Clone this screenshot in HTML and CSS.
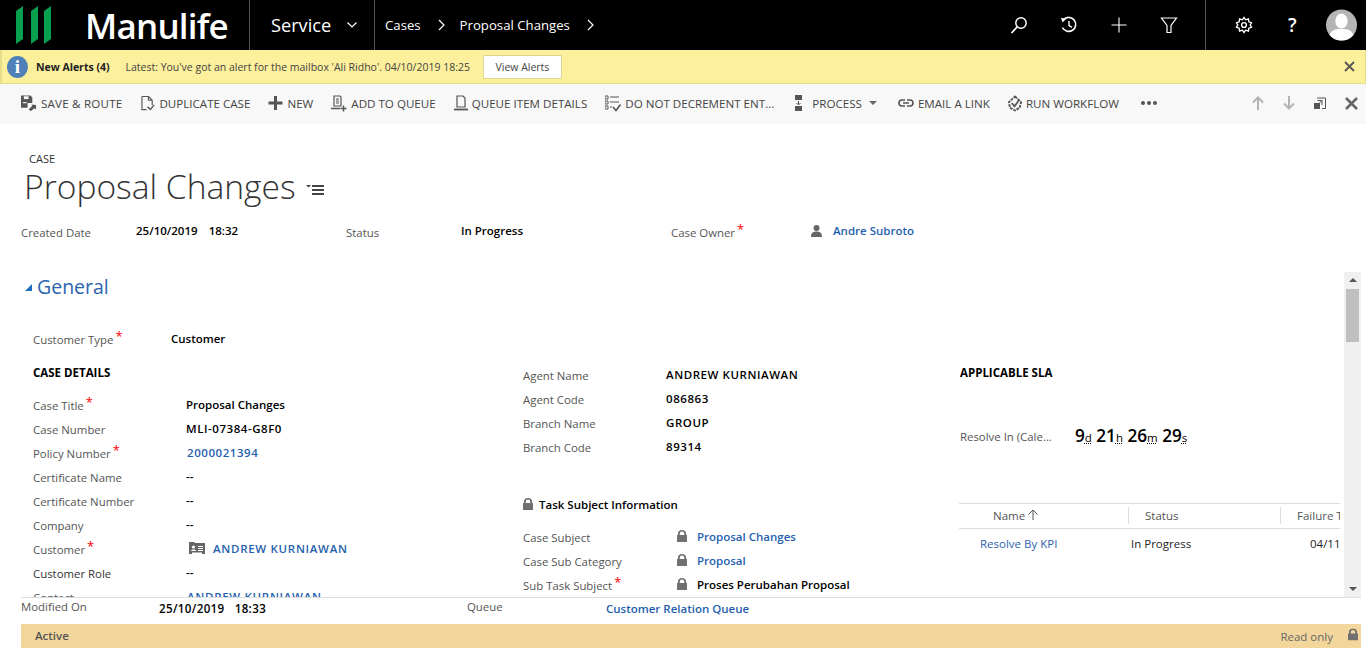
FILE: index.html
```html
<!DOCTYPE html>
<html lang="en">
<head>
  <meta charset="UTF-8">
  <meta name="viewport" content="width=device-width, initial-scale=1.0">
  <title>Proposal Changes</title>
  <link rel="stylesheet" href="styles.css">
</head>
<body>
  <!-- top navigation -->
  <header class="nav">
    <div class="logo">
      <svg class="logo-mark" width="36" height="38" viewBox="0 0 36 38">
        <path d="M0 5 L7 0 V33 L0 38 Z M15 5 L22 0 V33 L15 38 Z M28 5 L35 0 V33 L28 38 Z" fill="#06a04f"/>
      </svg>
      <span class="logo-text">Manulife</span>
    </div>
    <div class="nav-service">
      <span>Service</span>
      <svg width="10" height="6" viewBox="0 0 10 6"><path d="M0.5 0.5 L5 5 L9.5 0.5" fill="none" stroke="#fff" stroke-width="1.2"/></svg>
    </div>
    <div class="crumbs">
      <span>Cases</span>
      <svg width="7" height="12" viewBox="0 0 7 12"><path d="M1 1 L6 6 L1 11" fill="none" stroke="#fff" stroke-width="1.2"/></svg>
      <span>Proposal Changes</span>
      <svg width="7" height="12" viewBox="0 0 7 12"><path d="M1 1 L6 6 L1 11" fill="none" stroke="#fff" stroke-width="1.2"/></svg>
    </div>
    <div class="nav-icons">
      <svg width="18" height="18" viewBox="0 0 18 18"><circle cx="11" cy="7" r="5.2" fill="none" stroke="#fff" stroke-width="1.5"/><path d="M7.2 10.8 L1.5 17" stroke="#fff" stroke-width="1.7"/></svg>
      <svg width="18" height="18" viewBox="0 0 18 18"><path d="M3.4 3.8 A7 7 0 1 1 2.4 11.5" fill="none" stroke="#fff" stroke-width="1.6"/><path d="M1 2 L6.5 2.4 L2.6 6.6 Z" fill="#fff"/><path d="M9 5 V9.6 L12 11.4" fill="none" stroke="#fff" stroke-width="1.4"/></svg>
      <svg width="18" height="18" viewBox="0 0 18 18"><path d="M9 1.5 V16.5 M1.5 9 H16.5" stroke="#fff" stroke-width="1.1"/></svg>
      <svg width="18" height="18" viewBox="0 0 18 18"><path d="M1.5 2 H16.5 L11 9.5 V16.5 H7 V9.5 Z" fill="none" stroke="#fff" stroke-width="1.2"/></svg>
    </div>
    <div class="nav-end">
      <svg width="18" height="18" viewBox="0 0 18 18"><circle cx="9" cy="9" r="2.4" fill="none" stroke="#fff" stroke-width="1.4"/><path d="M9 1.5 L10.6 3.8 L13.4 3 L13.9 5.8 L16.5 6.8 L15.2 9 L16.5 11.2 L13.9 12.2 L13.4 15 L10.6 14.2 L9 16.5 L7.4 14.2 L4.6 15 L4.1 12.2 L1.5 11.2 L2.8 9 L1.5 6.8 L4.1 5.8 L4.6 3 L7.4 3.8 Z" fill="none" stroke="#fff" stroke-width="1.4"/></svg>
      <span class="help">?</span>
      <svg width="31" height="32" viewBox="0 0 31 32"><circle cx="15.5" cy="16" r="15.5" fill="#b5b5b5"/><ellipse cx="15.5" cy="12" rx="6.2" ry="7.5" fill="#fff"/><path d="M3.5 26 C6 20 11 20 15.5 20 C20 20 25 20 27.5 26 C24.5 29.8 20 31.5 15.5 31.5 C11 31.5 6.5 29.8 3.5 26 Z" fill="#fff"/></svg>
    </div>
  </header>

  <!-- alert bar -->
  <div class="alert">
    <span class="info-badge">i</span>
    <b class="alert-title">New Alerts (4)</b>
    <span class="alert-text">Latest: You've got an alert for the mailbox 'Ali Ridho'. 04/10/2019 18:25</span>
    <button class="alert-btn">View Alerts</button>
    <svg class="alert-close" width="11" height="11" viewBox="0 0 11 11"><path d="M1 1 L10 10 M10 1 L1 10" stroke="#555" stroke-width="1.8"/></svg>
  </div>

  <!-- command bar -->
  <div class="toolbar">
    <div class="tool tool-save"><svg width="16" height="17" viewBox="0 0 17 17"><path d="M0 0 H10 L12 2 V8 H7 V13 H0 Z" fill="#555"/><rect x="3" y="0.8" width="5" height="3" fill="#f8f8f8"/><rect x="2" y="7" width="4" height="1.2" fill="#f8f8f8"/><path d="M8 15 L12 11 L11 9.5 L16 10 L16 15 L14.5 13.5 L10.5 16.5 Z" fill="#555"/></svg>SAVE &amp; ROUTE</div>
    <div class="tool"><svg width="14" height="17" viewBox="0 0 15 17"><path d="M1 1 H8 L12 5 V10 M8 1 V5 H12 M6 15 H1 V1" fill="none" stroke="#555" stroke-width="1.2"/><path d="M7 12 L10 15 L14 10" fill="none" stroke="#555" stroke-width="1.5"/></svg>DUPLICATE CASE</div>
    <div class="tool"><svg width="15" height="14" viewBox="0 0 14 14"><path d="M7 0 V14 M0 7 H14" stroke="#555" stroke-width="3"/></svg>NEW</div>
    <div class="tool"><svg width="16" height="17" viewBox="0 0 16 17"><path d="M3 1 H9 L10 2 V11 H3 Z" fill="none" stroke="#555" stroke-width="1.2"/><path d="M5 4 H8 M5 6 H8 M5 8 H8" stroke="#555"/><path d="M0 13.5 H9" stroke="#555" stroke-width="1.5"/><path d="M12.5 10.5 V16.5 M9.5 13.5 H15.5" stroke="#555" stroke-width="1.5"/></svg>ADD TO QUEUE</div>
    <div class="tool"><svg width="14" height="16" viewBox="0 0 14 16"><path d="M3 1 H9 L11 3 V12 H3 Z" fill="none" stroke="#555" stroke-width="1.2"/><path d="M0 14.5 H14" stroke="#555" stroke-width="1.8"/></svg>QUEUE ITEM DETAILS</div>
    <div class="tool"><svg width="16" height="17" viewBox="0 0 16 17"><path d="M0 1 H3 V4 H0 Z M0 6 H3 V9 H0 Z M0 11 H3 V14 H0 Z" fill="none" stroke="#555"/><path d="M5 2 H14 M5 7 H14 M5 12 H7" stroke="#555" stroke-width="1.2"/><path d="M8 12 L11 15.5 L15.5 9.5" fill="none" stroke="#555" stroke-width="1.6"/></svg>DO NOT DECREMENT ENT...</div>
    <div class="tool tool-process"><svg width="7" height="16" viewBox="0 0 7 16"><rect x="0" y="0" width="7" height="5" fill="#555"/><path d="M3.5 6 V9 M1.5 8 L3.5 10 L5.5 8" fill="none" stroke="#555"/><rect x="0" y="11" width="7" height="5" fill="#555"/></svg>PROCESS<i class="caret"></i></div>
    <div class="tool"><svg width="16" height="8" viewBox="0 0 16 8"><path d="M7 1 H4 A3 3 0 0 0 4 7 H7 M9 1 H12 A3 3 0 0 1 12 7 H9 M5 4 H11" fill="none" stroke="#555" stroke-width="1.6"/></svg>EMAIL A LINK</div>
    <div class="tool"><svg width="14" height="17" viewBox="0 0 15 17"><path d="M7.5 1 L14 7 L12.5 13 L7.5 16 L2 13 L1 7 Z" fill="none" stroke="#555" stroke-width="2" stroke-dasharray="3 1"/><path d="M4 8 L7 11.5 L12 4.5" fill="none" stroke="#555" stroke-width="1.8"/></svg>RUN WORKFLOW</div>
    <div class="tool-dots"><i></i><i></i><i></i></div>
    <div class="tool-nav">
      <svg width="12" height="14" viewBox="0 0 12 14"><path d="M6 14 V2 M1 6.5 L6 1.5 L11 6.5" fill="none" stroke="#b3b3b3" stroke-width="2"/></svg>
      <svg width="12" height="14" viewBox="0 0 12 14"><path d="M6 0 V12 M1 7.5 L6 12.5 L11 7.5" fill="none" stroke="#b3b3b3" stroke-width="2"/></svg>
      <svg width="12" height="12" viewBox="0 0 12 12"><path d="M3 1 H11.5 V11.5 H8" fill="none" stroke="#555"/><rect x="0" y="6" width="6" height="6" fill="#555"/><path d="M3.5 3.5 H8 V8 M8 3.5 L4 7.5" fill="none" stroke="#555"/></svg>
      <svg width="13" height="13" viewBox="0 0 13 13"><path d="M1 1 L12 12 M12 1 L1 12" stroke="#666" stroke-width="2.6"/></svg>
    </div>
  </div>

  <!-- record header -->
  <section class="record">
    <div class="record-type">CASE</div>
    <h1>Proposal Changes
      <svg width="18" height="12" viewBox="0 0 18 12"><path d="M0 1 H5 L2.5 3.5 Z" fill="#444"/><path d="M6 2 H18 M6 6 H18 M6 10 H18" stroke="#444" stroke-width="2"/></svg>
    </h1>
    <div class="record-fields">
      <span class="label">Created Date</span><b class="value date">25/10/2019&nbsp;&nbsp; 18:32</b>
      <span class="label">Status</span><b class="value">In Progress</b>
      <span class="label">Case Owner<i class="req">*</i></span>
      <span class="owner">
        <svg width="11" height="12" viewBox="0 0 11 12"><circle cx="5.5" cy="3" r="3" fill="#666"/><path d="M0 12 C0 7 3 6.5 5.5 6.5 C8 6.5 11 7 11 12 Z" fill="#666"/></svg>
        <a class="link">Andre Subroto</a>
      </span>
    </div>
  </section>

  <!-- scrolling form -->
  <section class="scroller">
    <div class="scroller-body">
      <h2><i class="section-arrow"></i>General</h2>
      <div class="type-row">
        <span class="label">Customer Type<i class="req">*</i></span>
        <b class="value">Customer</b>
      </div>
      <div class="columns">
        <div class="col-left">
          <h3>CASE DETAILS</h3>
          <div class="rows">
            <span class="label">Case Title<i class="req">*</i></span><b class="value">Proposal Changes</b>
            <span class="label">Case Number</span><b class="value caps">MLI-07384-G8F0</b>
            <span class="label">Policy Number<i class="req">*</i></span><a class="link value-link caps">2000021394</a>
            <span class="label">Certificate Name</span><b class="value">--</b>
            <span class="label">Certificate Number</span><b class="value">--</b>
            <span class="label">Company</span><b class="value">--</b>
            <span class="label">Customer<i class="req">*</i></span>
            <span class="value-icon">
              <svg width="16" height="12" viewBox="0 0 16 12"><path d="M0 0 H5 L6 1 H16 V12 H13 V10.5 H3 V12 H0 Z" fill="#666"/><circle cx="4.5" cy="5" r="1.6" fill="#fff"/><path d="M2 9 C2 7 7 7 7 9 Z" fill="#fff"/><path d="M9 4.5 H14 M9 6.5 H14 M9 8.5 H14" stroke="#fff"/></svg>
              <a class="link caps-wide">ANDREW KURNIAWAN</a>
            </span>
            <span class="label label-dark">Customer Role</span><b class="value">--</b>
            <span class="label">Contact</span><a class="link value-link caps-wide">ANDREW KURNIAWAN</a>
          </div>
        </div>
        <div class="col-mid">
          <div class="rows rows-mid">
            <span class="label">Agent Name</span><b class="value caps">ANDREW KURNIAWAN</b>
            <span class="label">Agent Code</span><b class="value caps">086863</b>
            <span class="label">Branch Name</span><b class="value caps">GROUP</b>
            <span class="label">Branch Code</span><b class="value caps">89314</b>
          </div>
          <h4>
            <svg class="lock" width="10" height="12" viewBox="0 0 10 12"><use href="#lock"/></svg>
            Task Subject Information
          </h4>
          <div class="rows rows-task">
            <span class="label">Case Subject</span>
            <span class="value-lock"><svg class="lock" width="10" height="12" viewBox="0 0 10 12"><use href="#lock"/></svg><a class="link">Proposal Changes</a></span>
            <span class="label">Case Sub Category</span>
            <span class="value-lock"><svg class="lock" width="10" height="12" viewBox="0 0 10 12"><use href="#lock"/></svg><a class="link">Proposal</a></span>
            <span class="label">Sub Task Subject<i class="req">*</i></span>
            <span class="value-lock"><svg class="lock" width="10" height="12" viewBox="0 0 10 12"><use href="#lock"/></svg><b class="value">Proses Perubahan Proposal</b></span>
          </div>
        </div>
        <div class="col-right">
          <h3>APPLICABLE SLA</h3>
          <div class="sla">
            <span class="label">Resolve In (Cale...</span>
            <span class="timer">9<u>d</u> 21<u>h</u> 26<u>m</u> 29<u>s</u></span>
          </div>
          <div class="grid-wrap">
            <div class="grid-row grid-head">
              <span class="th-name">Name
                <svg width="10" height="11" viewBox="0 0 10 11"><path d="M5 11 V1 M0.5 5.5 L5 1 L9.5 5.5" fill="none" stroke="#555" stroke-width="1"/></svg>
              </span>
              <span class="th">Status</span>
              <span class="th">Failure Time</span>
            </div>
            <div class="grid-row grid-body">
              <a class="td-name">Resolve By KPI</a>
              <span class="td-status">In Progress</span>
              <span class="td-date">04/11/2019</span>
            </div>
          </div>
        </div>
      </div>
    </div>
    <div class="scrollbar">
      <i class="arrow-up"></i>
      <div class="track"><div class="thumb"></div></div>
      <i class="arrow-down"></i>
    </div>
  </section>

  <!-- record footer -->
  <footer class="foot">
    <div class="foot-fields">
      <span class="label">Modified On</span><b class="value foot-date">25/10/2019&nbsp;&nbsp; 18:33</b>
      <span class="label">Queue</span><a class="link foot-link">Customer Relation Queue</a>
    </div>
    <div class="status-bar">
      <b>Active</b>
      <span class="readonly">Read only</span>
      <svg width="10" height="13" viewBox="0 0 10 12"><use href="#lock"/></svg>
    </div>
  </footer>

  <svg class="defs" width="0" height="0">
    <symbol id="lock" viewBox="0 0 10 12"><path d="M0 5 H1 V3.5 A4 3.5 0 0 1 9 3.5 V5 H10 V12 H0 Z M2.8 5 H7.2 V3.5 A2.2 2 0 0 0 2.8 3.5 Z" fill="#707070" fill-rule="evenodd"/></symbol>
  </svg>
</body>
</html>
```

FILE: styles.css
```css
html, body {
  margin: 0;
  padding: 0;
  height: 100%;
  overflow: hidden;
}

body {
  font-family: "Open Sans", "Noto Sans", sans-serif;
  font-size: 11.5px;
  color: #000;
  background: #fff;
}

/* nav */
.nav {
  display: flex;
  align-items: stretch;
  height: 50px;
  background: #000;
  color: #fff;
}

.logo {
  display: flex;
  align-items: center;
  width: 250px;
  box-sizing: border-box;
  padding-left: 16px;
  border-right: 1px solid #555;
}

.logo-text {
  margin-left: 33px;
  font-size: 35px;
  font-weight: 600;
  letter-spacing: -0.8px;
}

.nav-service {
  display: flex;
  align-items: center;
  gap: 16px;
  width: 125px;
  box-sizing: border-box;
  padding-left: 21px;
  font-size: 18.2px;
  border-right: 1px solid #555;
}

.crumbs {
  display: flex;
  align-items: center;
  gap: 17px;
  padding-left: 10px;
  font-size: 13.2px;
  flex: 1;
}

.crumbs svg {
  margin-right: -2px;
}

.nav-icons {
  display: flex;
  align-items: center;
  gap: 32px;
  padding-right: 27px;
}

.nav-end {
  display: flex;
  align-items: center;
  width: 161px;
  box-sizing: border-box;
  padding-left: 29px;
  border-left: 1px solid #555;
}

.help {
  margin-left: 35px;
  margin-right: 29px;
  font-size: 19px;
  font-weight: 600;
}

/* alert */
.alert {
  display: flex;
  align-items: center;
  height: 34px;
  box-sizing: border-box;
  padding-left: 5px;
  background: #fdf09c;
  border: 1px solid #e6dd8a;
  border-top: none;
  border-left: 2px solid #e6dd8a;
  font-size: 10.5px;
  color: #444;
}

.info-badge {
  width: 21px;
  height: 22px;
  line-height: 22px;
  border-radius: 50%;
  background: #4f81b8;
  color: #fff;
  text-align: center;
  font-family: "Liberation Serif", serif;
  font-size: 19px;
  font-weight: 700;
}

.alert-title {
  margin-left: 8px;
  color: #222;
}

.alert-text {
  margin-left: 16px;
}

.alert-btn {
  margin-left: 13px;
  width: 79px;
  height: 24px;
  padding: 0;
  background: #fff;
  border: 1px solid #ddd592;
  color: #444;
  font-family: inherit;
  font-size: 10.5px;
}

.alert-close {
  margin-left: auto;
  margin-right: 10px;
}

/* toolbar */
.toolbar {
  display: flex;
  align-items: center;
  gap: 18px;
  height: 38px;
  padding: 0 0 2px 21px;
  background: #f8f8f8;
  font-size: 11.6px;
  color: #444;
}

.tool {
  display: flex;
  align-items: center;
  gap: 4px;
  white-space: nowrap;
}

.tool-save {
  letter-spacing: 0.2px;
  margin-right: 1px;
}

.tool-process {
  gap: 10px;
  margin: 0 3px;
}

.caret {
  width: 0;
  height: 0;
  margin-left: -3px;
  border: 4px solid transparent;
  border-top: 4px solid #666;
  border-bottom: none;
}

.tool-dots {
  display: flex;
  gap: 2px;
  margin-left: 4px;
}

.tool-dots i {
  width: 4px;
  height: 4px;
  border-radius: 50%;
  background: #555;
}

.tool-nav {
  display: flex;
  align-items: center;
  gap: 19px;
  margin-left: auto;
  padding-right: 8px;
}

/* record header */
.record {
  height: 148px;
  box-sizing: border-box;
  padding: 27px 0 0 21px;
}

.record-type {
  margin-left: 8px;
  font-size: 11px;
  line-height: 15px;
  color: #333;
}

h1 {
  display: flex;
  align-items: center;
  gap: 10px;
  margin: 0 0 0 3px;
  height: 40px;
  line-height: 40px;
  font-size: 33.6px;
  font-weight: 300;
  color: #333;
}

h1 svg {
  margin-top: 8px;
}

.record-fields {
  display: grid;
  grid-template-columns: 115px 210px 115px 210px 140px 1fr;
  align-items: center;
  margin-top: 14px;
  height: 24px;
}

.label {
  color: #555;
  font-size: 11.4px;
  white-space: nowrap;
}

.label-dark {
  color: #333;
}

.value {
  font-weight: 600;
  color: #000;
  margin-top: -2px;
  white-space: nowrap;
}

.record-fields .value {
  margin-top: -3px;
}

.date {
  word-spacing: 0.7px;
}

.caps {
  letter-spacing: 0.55px;
}

.caps-wide {
  letter-spacing: 0.7px;
}

.link {
  color: #1f5fae;
  font-weight: 600;
  white-space: nowrap;
}

.req {
  color: #f00;
  font-style: normal;
  font-size: 13px;
  margin-left: 2px;
  position: relative;
  top: -3px;
}

.owner {
  display: flex;
  align-items: center;
  gap: 11px;
  margin-top: -3px;
}

/* scrolling form */
.scroller {
  display: flex;
  height: 325px;
  margin-right: 5px;
}

.scroller-body {
  flex: 1;
  overflow: hidden;
  min-width: 0;
}

h2 {
  display: flex;
  align-items: center;
  margin: -1px 0 0 25px;
  height: 30px;
  font-size: 19.5px;
  font-weight: 400;
  color: #2c64b0;
}

.section-arrow {
  width: 0;
  height: 0;
  margin-right: 5px;
  margin-top: 2px;
  border-left: 7px solid transparent;
  border-bottom: 7px solid #1f6fc0;
}

.type-row {
  display: grid;
  grid-template-columns: 138px 1fr;
  align-items: center;
  margin: 26px 0 0 33px;
  height: 24px;
}

.columns {
  display: grid;
  grid-template-columns: 490px 437px 380px;
  margin: 10px 0 0 33px;
  width: 1307px;
}

h3 {
  margin: 0;
  height: 24px;
  line-height: 24px;
  font-size: 11.5px;
  font-weight: 700;
  color: #000;
}

.rows {
  display: grid;
  grid-template-columns: 153px 1fr;
  grid-auto-rows: 24px;
  align-items: center;
  margin-top: 8px;
}

.rows-mid {
  margin-top: 2px;
  grid-template-columns: 143px 1fr;
}

.rows-task {
  margin-top: 9px;
  grid-template-columns: 154px 1fr;
}

.value-link {
  margin-top: -2px;
  margin-left: 1px;
}

.value-icon {
  display: flex;
  align-items: center;
  gap: 8px;
  margin-top: -2px;
  margin-left: 3px;
}

h4 {
  display: flex;
  align-items: center;
  gap: 6px;
  margin: 33px 0 0;
  height: 24px;
  font-size: 11.5px;
  font-weight: 600;
}

.value-lock {
  display: flex;
  align-items: center;
  gap: 10px;
  margin-top: -2px;
}

.value-lock .value {
  margin-top: 0;
}

.sla {
  display: flex;
  align-items: center;
  gap: 23px;
  margin-top: 39px;
  height: 24px;
}

.timer {
  font-size: 17.2px;
  font-weight: 600;
  margin-top: -2px;
}

.timer u {
  font-size: 11.5px;
  font-weight: 400;
  text-decoration: underline dotted;
}

.grid-wrap {
  overflow: hidden;
  margin-top: 55px;
  margin-left: -1px;
  border-top: 1px solid #ddd;
}

.grid-row {
  display: grid;
  grid-template-columns: 169px 152px 152px;
  width: 473px;
  white-space: nowrap;
}

.grid-head {
  height: 24px;
  align-items: center;
  border-bottom: 1px solid #ddd;
  color: #555;
}

.th-name {
  padding-left: 34px;
  margin-top: -2px;
}

.th {
  padding-left: 16px;
  border-left: 1px solid #ddd;
  line-height: 17px;
  margin-top: -2px;
}

.grid-body {
  height: 28px;
  align-items: center;
}

.td-name {
  padding-left: 21px;
  color: #2c64b0;
}

.td-status {
  padding-left: 3px;
  color: #222;
}

.td-date {
  padding-left: 30px;
  color: #222;
}

/* scrollbar */
.scrollbar {
  display: flex;
  flex-direction: column;
  align-items: center;
  width: 17px;
  background: #f0f0f0;
}

.track {
  flex: 1;
  width: 100%;
  padding-top: 1px;
}

.thumb {
  width: 13px;
  height: 53px;
  margin: 0 auto;
  background: #bfbfbf;
}

.arrow-up, .arrow-down {
  width: 0;
  height: 0;
  margin: 6px 0;
  border-left: 4px solid transparent;
  border-right: 4px solid transparent;
}

.arrow-up {
  border-bottom: 4px solid #555;
}

.arrow-down {
  border-top: 4px solid #555;
}

/* footer */
.foot {
  margin-left: 21px;
  margin-right: 5px;
  border-top: 1px solid #ddd;
}

.foot-fields {
  display: grid;
  grid-template-columns: 138px 308px 139px 1fr;
  align-items: start;
  height: 25px;
  padding-top: 1px;
}

.foot-date {
  margin-top: 2px;
  letter-spacing: 0.35px;
  font-size: 11.6px;
}

.foot-link {
  margin-top: 2px;
}

.status-bar {
  display: flex;
  align-items: center;
  height: 24px;
  padding: 0 3px 0 14px;
  background: #f3d69b;
  color: #555;
}

.status-bar b {
  font-weight: 600;
  margin-top: -2px;
}

.status-bar svg {
  margin-top: -4px;
}

.readonly {
  margin-left: auto;
  margin-right: 15px;
  color: #666;
}

.defs {
  position: absolute;
}
```
